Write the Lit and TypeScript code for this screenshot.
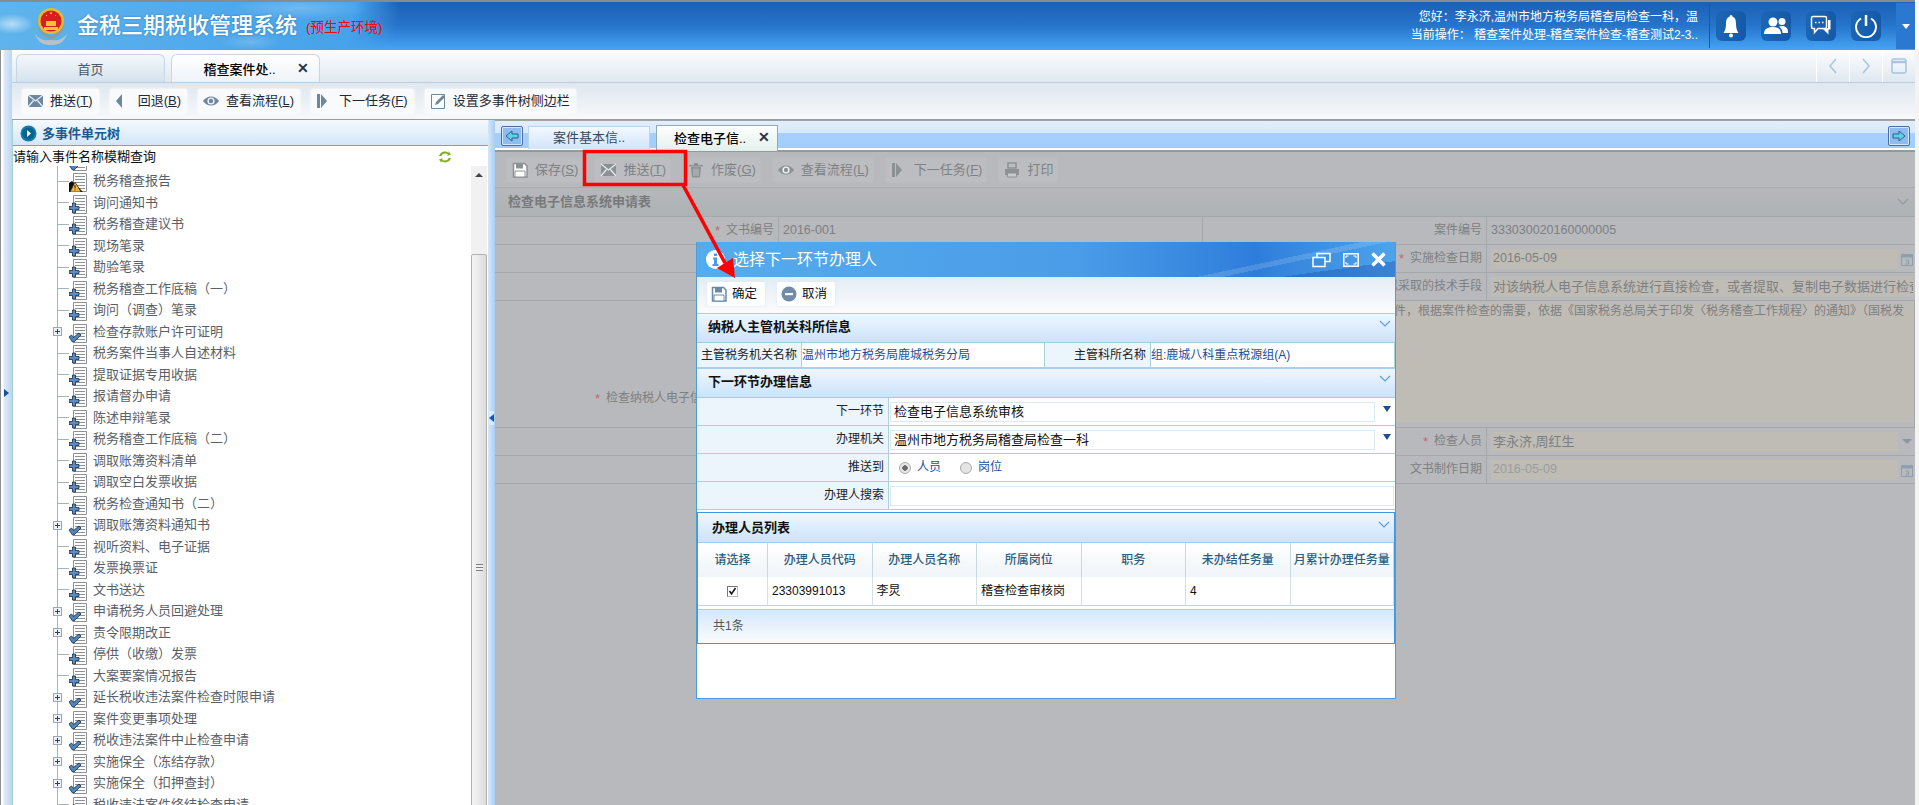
import { LitElement, html, css, svg } from 'lit';
import { customElement } from 'lit/decorators.js';

const docIcon = (kind: string) => html`
  <svg class="doc" width="20" height="22" viewBox="0 0 20 22">
    <path d="M4.500 3.500h13v18h-13z" fill="#fff" stroke="#8d9094"/>
    <path d="M6 6.500h10M6 9.500h10M6 12.500h10M6 15.500h10M6 18.500h10" stroke="#8d9094"/>
    ${kind === 'p' ? svg`<path d="M3.500 11h3v3.500H10v3H6.500V21h-3v-3.500H0v-3h3.500z" fill="#5a8bc6" stroke="#1d2b3c" stroke-width=".8"/>` : ''}
    ${kind === 'c' ? svg`<path d="M0 16l2.500-2 2 2.500L10 12l2 2-7 7H3.500z" fill="#4f86c0" stroke="#1b2835" stroke-width=".8"/>` : ''}
    ${kind === 'w' ? svg`<path d="M0 22V13l3-2 11 11z" fill="#111"/><path d="M6 12l6 10H1z" fill="#f6b73c" stroke="#222" stroke-width=".7"/><path d="M6 15v3.500M6 19.500v1" stroke="#222"/>` : ''}
  </svg>`;

const mailIcon = svg`<rect x="1" y="2" width="15" height="12" fill="currentColor"/><path d="M1 2l7.500 6L16 2M1 14l5.500-6.500M16 14l-5.500-6.500" fill="none" stroke="#e8eef3" stroke-width="1.200"/>`;
const backIcon = svg`<path d="M7 1v14L1 8z" fill="currentColor"/>`;
const eyeIcon = svg`<path d="M0 8c4-6 12-6 16 0-4 6-12 6-16 0z" fill="currentColor"/><circle cx="8" cy="8" r="3.600" fill="#f2f5f8"/><circle cx="8" cy="8" r="2.200" fill="currentColor"/>`;
const nextIcon = svg`<path d="M1 1h3v14H1z" fill="currentColor"/><path d="M5 1l6 7-6 7z" fill="currentColor"/>`;
const penIcon = svg`<path d="M1.500 1.500h13v14h-13z" fill="#fff" stroke="currentColor"/><path d="M5 12l1-3 7-7 2 2-7 7z" fill="currentColor"/>`;
const saveIcon = svg`<path d="M1.500 1.500h11l2.500 2.500v11h-13.500z" fill="#fff" stroke="currentColor" stroke-width="1.500"/><path d="M4 1.500h7v5H4z" fill="currentColor"/><path d="M3 9h10v6H3z" fill="#fff" stroke="currentColor"/>`;
const trashIcon = svg`<path d="M1 3h14v1.500H1zM6 1h4v2H6z" fill="currentColor"/><path d="M3 5h10l-1 10.500H4z" fill="currentColor"/><path d="M6 6.500v7.500M8 6.500v7.500M10 6.500v7.500" stroke="#c0c1c3"/>`;
const printIcon = svg`<path d="M4 1h8v5H4z" fill="none" stroke="currentColor" stroke-width="1.500"/><path d="M1 7h14v6H1z" fill="currentColor"/><path d="M3.500 11h9v4h-9z" fill="#c9cacc" stroke="currentColor"/>`;
const cancelIcon = svg`<circle cx="8" cy="8" r="7.500" fill="#6f8ca8"/><path d="M4 7h8v2.200H4z" fill="#fff"/>`;

const icon = (body: unknown) => html`
  <svg class="ti" viewBox="0 0 16 16" width="16" height="16">${body}</svg>`;

const shortcut = (label: string, key: string) => html`<span>${label}(<u>${key}</u>)</span>`;

const chevron = html`<svg class="chev" width="12" height="8" viewBox="0 0 12 8"><path d="M1 1l5 5 5-5" fill="none" stroke="currentColor" stroke-width="1.200"/></svg>`;
const calendar = html`<svg class="cal" width="12" height="14" viewBox="0 0 12 14"><path d="M.5 2.500h11v11H.500z" fill="none" stroke="#8ea0ad"/><path d="M.500 2.500h11v3H.500z" fill="#8ea0ad"/><path d="M4.500 8h3v4h-3M7.500 10h-2" fill="none" stroke="#8ea0ad"/></svg>`;

const treeItems: [string, string][] = [
  ['', 'c'],
  ['税务稽查报告', 'w'],
  ['询问通知书', 'p'],
  ['税务稽查建议书', 'p'],
  ['现场笔录', 'p'],
  ['勘验笔录', 'p'],
  ['税务稽查工作底稿（一）', 'p'],
  ['询问（调查）笔录', 'p'],
  ['检查存款账户许可证明', 'c'],
  ['税务案件当事人自述材料', 'p'],
  ['提取证据专用收据', 'p'],
  ['报请督办申请', 'p'],
  ['陈述申辩笔录', 'p'],
  ['税务稽查工作底稿（二）', 'p'],
  ['调取账簿资料清单', 'p'],
  ['调取空白发票收据', 'p'],
  ['税务检查通知书（二）', 'p'],
  ['调取账簿资料通知书', 'c'],
  ['视听资料、电子证据', 'p'],
  ['发票换票证', 'p'],
  ['文书送达', 'p'],
  ['申请税务人员回避处理', 'c'],
  ['责令限期改正', 'c'],
  ['停供（收缴）发票', 'p'],
  ['大案要案情况报告', 'p'],
  ['延长税收违法案件检查时限申请', 'c'],
  ['案件变更事项处理', 'c'],
  ['税收违法案件中止检查申请', 'c'],
  ['实施保全（冻结存款）', 'c'],
  ['实施保全（扣押查封）', 'c'],
  ['税收违法案件终结检查申请', 'p']
];

@customElement('app-root')
export class AppRoot extends LitElement {
  static styles = css`
    :host {
      display: block;
      position: relative;
      width: 1919px;
      height: 805px;
      overflow: hidden;
      background: #fff;
      font: 13px/1.2 "Liberation Sans", "Noto Sans CJK SC", sans-serif;
      color: #222;
    }
    u { text-decoration: underline; }
    svg { flex: none; display: block; }

    .header {
      height: 50px;
      box-sizing: border-box;
      border-top: 2px solid #8a8a8a;
      margin-right: 4px;
      display: flex;
      align-items: center;
      color: #fff;
      background:
        radial-gradient(ellipse 22px 10px at 12px 22px, rgba(255,255,255,.55), transparent),
        radial-gradient(ellipse 30px 8px at 250px 40px, rgba(255,255,255,.18), transparent),
        radial-gradient(ellipse 70px 12px at 300px 6px, rgba(255,255,255,.22), transparent),
        linear-gradient(100deg, #5fb4ec 0, #46a2ea 350px, rgba(70,160,235,0) 395px),
        linear-gradient(180deg, #1c5fb4 0, #2675cb 50%, #46a4f5 100%);
    }
    .emblem { margin-left: 32px; }
    .sys-title {
      margin-left: 7px;
      font-size: 22px;
      font-weight: 500;
      text-shadow: 0 0 2px rgba(20,70,130,.5);
    }
    .sys-env { margin: 5px 0 0 9px; color: #f00; font-size: 13.500px; }
    .user-info {
      margin-left: auto;
      width: 300px;
      text-align: right;
      font-size: 12px;
      line-height: 18px;
      padding-right: 11px;
      white-space: nowrap;
    }
    .head-tools {
      display: flex;
      align-items: center;
      gap: 15px;
      height: 44px;
      padding-left: 6px;
      border-left: 1px solid #175a9e;
    }
    .head-btn {
      width: 30px;
      height: 30px;
      border-radius: 6px;
      background: linear-gradient(90deg, #1a66b5, #1559a8);
      display: flex;
      align-items: center;
      justify-content: center;
    }
    .head-drop {
      width: 19px;
      height: 46px;
      background: #2a78cf;
      display: flex;
      align-items: center;
      justify-content: center;
    }
    .caret { width: 0; height: 0; border: 4px solid transparent; border-top: 5px solid #fff; border-bottom: 0; }

    .main { display: flex; height: 755px; }
    .strip {
      width: 12px;
      box-sizing: border-box;
      border-left: 1px solid #8f9295;
      background: linear-gradient(90deg, #fff 0, #fff 2px, #dfeaf7 3px, #b9d7f6 11px);
      display: flex;
      align-items: center;
      padding: 0 0 70px 3px;
    }
    .tri-r { width: 0; height: 0; border: 4px solid transparent; border-left: 5px solid #14508f; border-right: 0; }
    .tri-l { width: 0; height: 0; border: 4px solid transparent; border-right: 5px solid #1559aa; border-left: 0; }
    .workspace { flex: 1; min-width: 0; display: flex; flex-direction: column; }
    .end { width: 4px; background: #f3f3f3; }

    .tabs {
      height: 33px;
      box-sizing: border-box;
      display: flex;
      align-items: flex-end;
      gap: 6px;
      padding-left: 4px;
      background: linear-gradient(180deg, #fbfdff, #dfe8f0);
      border-bottom: 1px solid #b4cfe6;
    }
    .tab {
      width: 149px;
      height: 28px;
      box-sizing: border-box;
      border: 1px solid #c3d7e8;
      border-bottom: 0;
      border-radius: 6px 6px 0 0;
      padding-top: 2px;
      display: flex;
      align-items: center;
      justify-content: center;
      position: relative;
      color: #4c5a68;
      background: linear-gradient(180deg, #f3f7fb, #d5e2ee);
    }
    .tab.on { background: linear-gradient(180deg, #fff, #eef3f8); color: #000; font-weight: 500; padding-right: 12px; }
    .tab-x { position: absolute; right: 10px; top: 5px; color: #24354a; font-size: 14px; font-weight: 700; }
    .tab-nav { margin-left: auto; display: flex; height: 100%; }
    .tab-nav div {
      width: 32px;
      border-left: 1px solid #fff;
      color: #a9c4dc;
      display: flex;
      align-items: center;
      justify-content: center;
    }

    .toolbar {
      height: 37px;
      box-sizing: border-box;
      display: flex;
      align-items: center;
      gap: 11px;
      padding: 0 0 0 10px;
      background: linear-gradient(180deg, #dfe7ef, #f7f9fb);
      border-bottom: 1px solid #9a9d9f;
    }
    .btn {
      display: flex;
      align-items: center;
      gap: 7px;
      height: 24px;
      padding: 0 6px 0 5px;
      background: #f8fafc;
      box-shadow: 0 0 3px #fff;
      border-radius: 2px;
      white-space: nowrap;
      color: #1e2a36;
    }
    .ti { color: #6d879f; }

    .body { flex: 1; min-height: 0; display: flex; }
    .left { width: 476px; display: flex; flex-direction: column; background: #fff; box-sizing: border-box; border-left: 1px solid #a8cfca; }
    .left-head {
      height: 26px;
      flex: none;
      box-sizing: border-box;
      display: flex;
      align-items: center;
      gap: 5px;
      padding: 2px 0 0 7px;
      font-weight: 700;
      color: #1e5a90;
      background: linear-gradient(180deg, #f5f9fd, #d3e7f8);
      border-bottom: 1px solid #6fa6cd;
    }
    .search {
      height: 20px;
      flex: none;
      box-sizing: border-box;
      display: flex;
      align-items: center;
      justify-content: space-between;
      padding: 2px 36px 0 0;
      font-size: 13px;
      color: #111;
    }
    .tree-wrap { flex: 1; min-height: 0; display: flex; }
    .tree { flex: 1; overflow: hidden; padding-left: 44px; }
    .tree-inner { border-left: 1px solid #a4b2c2; margin-top: -17px; }
    .row { height: 21.500px; display: flex; align-items: center; position: relative; }
    .conn { width: 11px; border-top: 1px solid #a4b2c2; flex: none; }
    .row span { margin-left: 4px; color: #5a6068; white-space: nowrap; }
    .exp {
      position: absolute;
      left: -5px;
      top: 6px;
      width: 9px;
      height: 9px;
      box-sizing: border-box;
      border: 1px solid #9aa7b5;
      background: #eef1f6;
    }
    .exp::before { content: ""; position: absolute; left: 1px; right: 1px; top: 3px; height: 1px; background: #283f7c; }
    .exp::after { content: ""; position: absolute; top: 1px; bottom: 1px; left: 3px; width: 1px; background: #283f7c; }
    .row.open .conn { border-color: transparent; }
    .scroll {
      width: 16px;
      flex: none;
      overflow: hidden;
      background: #f1f1f1;
      margin-right: 1px;
      position: relative;
    }
    .scroll-up { position: absolute; left: 4px; top: 7px; width: 0; height: 0; border: 4px solid transparent; border-bottom: 4px solid #444; border-top: 0; }
    .thumb {
      margin-top: 88px;
      height: 626px;
      box-sizing: border-box;
      border: 1px solid #b2b2b2;
      border-radius: 2px;
      background: linear-gradient(90deg, #f5f5f5, #dcdcdc);
      display: flex;
      align-items: center;
      justify-content: center;
    }
    .grip { width: 7px; height: 7px; background: repeating-linear-gradient(180deg, #7d7d7d 0 1px, #f0f0f0 1px 3px); }

    .gutter {
      width: 7px;
      background: linear-gradient(90deg, #d7e7fa, #a8cdf5);
      display: flex;
      align-items: center;
      justify-content: center;
      padding-bottom: 90px;
      box-sizing: content-box;
    }
    .gutter-tab { width: 5px; height: 14px; background: #dcebfb; display: flex; align-items: center; }

    .right { flex: 1; min-width: 0; display: flex; flex-direction: column; background: #b8b9bc; }
    .sub-tabs {
      height: 32px;
      flex: none;
      box-sizing: border-box;
      display: flex;
      align-items: flex-end;
      padding: 0 5px 0 6px;
      position: relative;
      background: linear-gradient(180deg, #e3eefd 0, #d8e8fd 40%, #a7cffb 41%, #a2cdfb 92%, #fff 93%);
      border-top: 1px solid #9fa4a6;
      border-bottom: 2px solid #8f9b9f;
    }
    .arrow-btn {
      width: 22px;
      height: 20px;
      margin: 0 0 4px;
      box-sizing: border-box;
      border: 1px solid #4b6fa0;
      border-radius: 2px;
      background: #8fbcee;
      box-shadow: inset 0 0 0 1px #d5e6f8;
      display: flex;
      align-items: center;
      justify-content: center;
    }
    .sub-tab {
      width: 122px;
      height: 23px;
      box-sizing: border-box;
      border: 1px solid #b9d5ee;
      border-bottom: 0;
      display: flex;
      align-items: center;
      justify-content: center;
      color: #31485f;
      background: linear-gradient(180deg, #f3f8fe, #d1e5fb);
      margin: 0 0 1px 5px;
    }
    .sub-tab.on {
      margin-left: 6px;
      margin-bottom: -1px;
      height: 26px;
      border-color: #8ea9b8;
      background: linear-gradient(180deg, #fff, #e2f0ec);
      color: #000;
      font-weight: 500;
      padding-right: 14px;
      position: relative;
    }
    .sub-tab .tab-x { right: 7px; top: 3px; }
    .push-right { margin-left: auto; }

    .mask-bar {
      height: 35px;
      flex: none;
      display: flex;
      align-items: center;
      gap: 13px;
      padding-left: 12px;
      color: #7f8284;
    }
    .mask-bar .btn { background: #bcbdc0; box-shadow: 0 0 2px #c2c3c6; color: #7f8284; padding-right: 4px; }
    .mask-bar .ti { color: #8c9194; }
    .mask-title {
      height: 30px;
      flex: none;
      box-sizing: border-box;
      display: flex;
      align-items: center;
      justify-content: space-between;
      padding: 0 6px 0 13px;
      font-weight: 700;
      color: #77797b;
      border-top: 1px solid #a9acae;
      border-bottom: 1px solid #a2a8aa;
      background: linear-gradient(180deg, #b6b7ba, #aeb3b6);
    }
    .mask-title .chev { color: #919ca3; }
    .mask-form { display: grid; grid-template-columns: 284px 424px 284px 1fr; grid-template-rows: 28px 28px 28px 127px 28px 28px; }
    .lab, .val {
      box-sizing: border-box;
      border-bottom: 1px solid #a5a8aa;
      display: flex;
      align-items: center;
      color: #7d8082;
      white-space: nowrap;
      overflow: hidden;
    }
    .lab { justify-content: flex-end; padding-right: 4px; border-right: 1px solid #a5a8aa; font-size: 12px; }
    .lab i { font-style: normal; color: #c2696d; margin-right: 6px; font-size: 13px; }
    .val { padding-left: 4px; border-right: 1px solid #a5a8aa; font-size: 12.500px; }
    .val.last { border-right: 0; gap: 3px; padding-right: 2px; }
    .beige { flex: 1; min-width: 0; height: 20px; display: flex; align-items: center; padding-left: 2px; background: #bfbcb5; overflow: hidden; font-size: 13px; }
    .beige.num { font-size: 12.500px; }
    .wrap-lab { align-items: flex-start; padding-top: 90px; }
    .area { grid-column: 2 / 5; align-items: flex-start; padding: 1px 0 0 0; }
    .area div { width: 100%; height: 120px; background: #bfbcb5; padding: 2px 0 0 615px; box-sizing: border-box; overflow: hidden; font-size: 12px; }
    .drop-tri { width: 0; height: 0; border: 5px solid transparent; border-top: 5px solid #8b96a3; border-bottom: 0; margin: 0 1px; }
    .pale { color: #9a9d9f; }

    .overlay { position: absolute; left: 0; top: 0; pointer-events: none; }

    .modal {
      position: absolute;
      left: 696px;
      top: 242px;
      width: 700px;
      height: 457px;
      box-sizing: border-box;
      background: #fff;
      border: 1px solid #4a9de0;
      border-top: 0;
      display: flex;
      flex-direction: column;
    }
    .m-title {
      height: 35px;
      flex: none;
      display: flex;
      align-items: center;
      padding: 0 9px 0 9px;
      color: #fff;
      font-size: 16px;
      background:
        linear-gradient(168deg, transparent 0 77%, rgba(255,255,255,.14) 77% 80%, transparent 80%),
        linear-gradient(172deg, transparent 0 88%, rgba(20,70,170,.35) 88%),
        linear-gradient(90deg, #55acec, #4a9ce8 55%, #2f7ddb 80%, #4ea4ea 100%);
    }
    .m-title b { font-weight: 400; margin-left: 8px; }
    .m-win { margin-left: auto; display: flex; gap: 12px; align-items: center; }
    .m-bar {
      height: 36px;
      flex: none;
      box-sizing: border-box;
      display: flex;
      align-items: center;
      gap: 12px;
      padding: 0 0 2px 10px;
      background: linear-gradient(180deg, #e3ecf4, #fbfcfe);
    }
    .m-bar .btn { gap: 5px; padding: 0 8px 0 4px; font-size: 12.500px; color: #111; background: #fdfeff; box-shadow: 0 0 3px #dfe6ee; }
    .m-bar .ti { color: #6b89a6; }
    .sec {
      height: 30px;
      flex: none;
      box-sizing: border-box;
      display: flex;
      align-items: center;
      justify-content: space-between;
      padding: 0 4px 3px 11px;
      font-weight: 700;
      color: #111;
      border-top: 1px solid #a8d0ea;
      border-bottom: 1px solid #a2cde0;
      background: linear-gradient(180deg, #eff7ff, #cbe3fb);
    }
    .sec .chev { color: #5f9ddc; margin-top: -5px; }
    .info-row { height: 25px; flex: none; display: grid; grid-template-columns: 105px 243px 106px 1fr; font-size: 12px; }
    .info-row > div {
      box-sizing: border-box;
      display: flex;
      align-items: center;
      border-right: 1px solid #a9d3d6;
      border-bottom: 1px solid #a9d3d6;
      white-space: nowrap;
      overflow: hidden;
    }
    .k { justify-content: flex-end; padding-right: 4px; background: #edf5fc; color: #222; font-size: 12px; }
    .v { color: #1b4d9c; }
    .form-row { height: 28px; flex: none; display: grid; grid-template-columns: 192px 1fr; }
    .form-row > div { box-sizing: border-box; border-bottom: 1px solid #a9d3d6; display: flex; align-items: center; }
    .form-row .k { border-right: 1px solid #a9d3d6; }
    .f-val { padding: 0 4px 0 1px; gap: 8px; }
    .f-val.wide { padding-right: 1px; }
    .f-val.radios { gap: 5px; font-size: 12px; }
    .input {
      flex: 1;
      height: 20px;
      box-sizing: border-box;
      border: 1px solid #dde8ee;
      padding-left: 3px;
      color: #111;
      line-height: 18px;
    }
    .tri-down { width: 0; height: 0; border: 4.500px solid transparent; border-top: 6px solid #1d4e8d; border-bottom: 0; margin-bottom: 5px; }
    .radio { width: 12px; height: 12px; box-sizing: border-box; border-radius: 50%; border: 1px solid #aaa; background: #e4e4e4; margin-left: 8px; flex: none; }
    .radio.on { background: radial-gradient(circle, #6b6b6b 0 2.500px, #e8e8e8 3px); margin-left: 9px; }
    .radio-t { color: #1b4d9c; margin: 0 0 0 1px; }
    .radio-g { margin-left: 14px; }
    .list {
      margin-top: 2px;
      flex: none;
      height: 132px;
      box-sizing: border-box;
      border: 1px solid #3f97de;
      display: flex;
      flex-direction: column;
    }
    .list .sec { border-top: 0; border-bottom: 1px solid #9ecbe8; padding-left: 14px; padding-bottom: 0; height: 30px; }
    .grid { display: grid; grid-template-columns: 70px repeat(5, 104.500px) 1fr; }
    .th {
      height: 34px;
      box-sizing: border-box;
      border-right: 1px solid #c6d9de;
      display: flex;
      align-items: center;
      justify-content: center;
      font-size: 12px;
      font-weight: 500;
      color: #2e5d7d;
      background: linear-gradient(180deg, #fff, #eff4f8);
      white-space: nowrap;
    }
    .td {
      height: 29px;
      box-sizing: border-box;
      border-right: 1px solid #d4dfe1;
      border-bottom: 1px solid #c5d2d3;
      display: flex;
      align-items: center;
      padding-left: 4px;
      font-size: 12px;
      color: #111;
    }
    .td.center { justify-content: center; padding: 0; }
    .check { width: 11px; height: 11px; box-sizing: border-box; border: 1px solid #777; border-right-color: #bbb; border-bottom-color: #bbb; background: #fff; }
    .foot {
      flex: 1;
      margin-top: 3px;
      box-sizing: border-box;
      display: flex;
      align-items: center;
      padding-left: 15px;
      font-size: 12px;
      color: #555;
      border-top: 1px solid #a8d0ea;
      background: linear-gradient(180deg, #d5e7fa, #fafdff);
    }
  `;

  render() {
    return html`
      ${this.renderHeader()}
      <div class="main">
        <div class="strip"><div class="tri-r"></div></div>
        <div class="workspace">
          ${this.renderTabs()}
          <div class="toolbar">
            <div class="btn">${icon(mailIcon)}${shortcut('推送', 'T')}</div>
            <div class="btn">${icon(backIcon)}${shortcut('回退', 'B')}</div>
            <div class="btn">${icon(eyeIcon)}${shortcut('查看流程', 'L')}</div>
            <div class="btn">${icon(nextIcon)}${shortcut('下一任务', 'F')}</div>
            <div class="btn">${icon(penIcon)}<span>设置多事件树侧边栏</span></div>
          </div>
          <div class="body">
            ${this.renderLeft()}
            <div class="gutter"><div class="gutter-tab"><div class="tri-l"></div></div></div>
            ${this.renderRight()}
          </div>
        </div>
        <div class="end"></div>
      </div>
      ${this.renderModal()}
      <svg class="overlay" width="1919" height="805">
        <rect x="584.500" y="151.500" width="101" height="33" fill="none" stroke="#f00" stroke-width="3.500"/>
        <path d="M683 185L725 263" stroke="#f00" stroke-width="3.500"/>
        <path d="M735 278L717 268L733 258z" fill="#f00"/>
      </svg>
    `;
  }

  renderHeader() {
    return html`
      <div class="header">
        <svg class="emblem" width="38" height="38" viewBox="0 0 38 38">
          <path d="M3 27c5 6 10 7 16 6 6 1 11 0 16-6-3 9-9 11-16 11S6 36 3 27z" fill="#b9c1c6"/>
          <path d="M7 9C3 20 9 30 19 32 29 30 35 20 31 9c1 14-5 19-12 19S6 23 7 9z" fill="#8d9aa0"/>
          <circle cx="19" cy="14" r="13" fill="#e9b92f"/>
          <circle cx="19" cy="14" r="10.500" fill="#d5201f"/>
          <path d="M12 20h14v3H12zM14 14h10v5H14z" fill="#f1c63c"/>
          <path d="M19 4l1 3h-2zM14 8h1v1h-1zM23 8h1v1h-1z" fill="#f6d24a"/>
        </svg>
        <div class="sys-title">金税三期税收管理系统</div>
        <div class="sys-env">(预生产环境)</div>
        <div class="user-info">
          <div>您好：李永济,温州市地方税务局稽查局检查一科，温</div>
          <div>当前操作： 稽查案件处理-稽查案件检查-稽查测试2-3..</div>
        </div>
        <div class="head-tools">
          <div class="head-btn">
            <svg width="16" height="24" viewBox="0 0 16 24"><path d="M8 1c1 0 1.500.7 1.500 1.800 3 1 3.500 4 3.500 7.200 0 4 1 7 2.500 9H.5C2 17 3 14 3 10c0-3.200.5-6.200 3.500-7.200C6.500 1.700 7 1 8 1z" fill="#fff"/><circle cx="8" cy="21.500" r="2" fill="#fff"/></svg>
          </div>
          <div class="head-btn">
            <svg width="24" height="18" viewBox="0 0 24 18"><circle cx="9" cy="5" r="4.500" fill="#fff"/><circle cx="18" cy="4.500" r="3.500" fill="#fff"/><path d="M0 17c0-5 3.500-7 9-7s8 2 8 7z" fill="#fff"/><path d="M18 9c4 0 6 2 6 7h-5.500c0-3-1.500-5-3.500-6.500.9-.3 1.900-.5 3-.5z" fill="#fff"/></svg>
          </div>
          <div class="head-btn">
            <svg width="22" height="22" viewBox="0 0 22 22"><path d="M3 1.500h12c1 0 1.500.5 1.500 1.500v9c0 1-.5 1.500-1.500 1.500H8l-3.500 4v-4H3c-1 0-1.500-.5-1.500-1.500V3c0-1 .5-1.500 1.500-1.500z" fill="none" stroke="#fff" stroke-width="1.500"/><path d="M5 7.500h1.500M8.500 7.500H10M12 7.500h1.500" stroke="#fff" stroke-width="1.500"/><path d="M18 5h2.500v9.500h-2v5L14 15h-2l6-2z" fill="#fff"/></svg>
          </div>
          <div class="head-btn">
            <svg width="24" height="24" viewBox="0 0 24 24"><path d="M7 4.500a10 10 0 1 0 10 0" fill="none" stroke="#fff" stroke-width="2"/><path d="M12 1v11" stroke="#fff" stroke-width="2.500"/></svg>
          </div>
          <div class="head-drop"><div class="caret"></div></div>
        </div>
      </div>
    `;
  }

  renderTabs() {
    return html`
      <div class="tabs">
        <div class="tab">首页</div>
        <div class="tab on">稽查案件处..<span class="tab-x">✕</span></div>
        <div class="tab-nav">
          <div><svg width="10" height="18" viewBox="0 0 10 18"><path d="M8 2L2 9l6 7" fill="none" stroke="currentColor" stroke-width="1.500"/></svg></div>
          <div><svg width="10" height="18" viewBox="0 0 10 18"><path d="M2 2l6 7-6 7" fill="none" stroke="currentColor" stroke-width="1.500"/></svg></div>
          <div><svg width="16" height="16" viewBox="0 0 16 16"><rect x="1" y="1" width="14" height="14" rx="2" fill="none" stroke="currentColor" stroke-width="1.500"/><path d="M1 4h14" stroke="currentColor" stroke-width="2.500"/></svg></div>
        </div>
      </div>
    `;
  }

  renderLeft() {
    return html`
      <div class="left">
        <div class="left-head">
          <svg width="17" height="17" viewBox="0 0 17 17"><circle cx="8.500" cy="8.500" r="8" fill="#0f7ea8"/><circle cx="8.500" cy="8.500" r="6" fill="#06638e"/><path d="M7 5l4 3.500L7 12z" fill="#fff"/></svg>
          <span>多事件单元树</span>
        </div>
        <div class="search">
          <span>请输入事件名称模糊查询</span>
          <svg width="14" height="14" viewBox="0 0 14 14"><path d="M1 6C2 2 7 0 10.500 3V1L13 4.500 9 6l1-1.500C8 3 4.500 3 3.500 6zM13 8c-1 4-6 6-9.500 3v2L1 9.500 5 8 4 9.500c2 1.500 5.500 1.500 6.500-1.500z" fill="#7fb021"/></svg>
        </div>
        <div class="tree-wrap">
          <div class="tree">
            <div class="tree-inner">
              ${treeItems.map(([text, kind]) => html`
                <div class="row ${kind === 'c' ? 'open' : ''}">
                  ${kind === 'c' ? html`<div class="exp"></div>` : ''}
                  <div class="conn"></div>
                  ${docIcon(kind)}
                  <span>${text}</span>
                </div>
              `)}
            </div>
          </div>
          <div class="scroll">
            <div class="scroll-up"></div>
            <div class="thumb"><div class="grip"></div></div>
          </div>
        </div>
      </div>
    `;
  }

  renderRight() {
    return html`
      <div class="right">
        <div class="sub-tabs">
          <div class="arrow-btn">
            <svg width="14" height="12" viewBox="0 0 14 12"><path d="M1 6l6-5v3h6v4H7v3z" fill="#5fd3e6" stroke="#2b5f8f"/></svg>
          </div>
          <div class="sub-tab">案件基本信..</div>
          <div class="sub-tab on">检查电子信..<span class="tab-x">✕</span></div>
          <div class="arrow-btn push-right">
            <svg width="14" height="12" viewBox="0 0 14 12"><path d="M13 6L7 1v3H1v4h6v3z" fill="#5fd3e6" stroke="#2b5f8f"/></svg>
          </div>
        </div>
        <div class="mask-bar">
          <div class="btn">${icon(saveIcon)}${shortcut('保存', 'S')}</div>
          <div class="btn">${icon(mailIcon)}${shortcut('推送', 'T')}</div>
          <div class="btn">${icon(trashIcon)}${shortcut('作废', 'G')}</div>
          <div class="btn">${icon(eyeIcon)}${shortcut('查看流程', 'L')}</div>
          <div class="btn">${icon(nextIcon)}${shortcut('下一任务', 'F')}</div>
          <div class="btn">${icon(printIcon)}<span>打印</span></div>
        </div>
        <div class="mask-title"><span>检查电子信息系统申请表</span>${chevron}</div>
        <div class="mask-form">
          <div class="lab"><i>*</i>文书编号</div>
          <div class="val">2016-001</div>
          <div class="lab">案件编号</div>
          <div class="val last">333030020160000005</div>

          <div class="lab"></div>
          <div class="val"></div>
          <div class="lab"><i>*</i>实施检查日期</div>
          <div class="val last"><div class="beige num">2016-05-09</div>${calendar}</div>

          <div class="lab"></div>
          <div class="val"></div>
          <div class="lab">拟采取的技术手段</div>
          <div class="val last"><div class="beige">对该纳税人电子信息系统进行直接检查，或者提取、复制电子数据进行检查</div></div>

          <div class="lab wrap-lab"><i>*</i>检查纳税人电子信息系统的原因</div>
          <div class="val area"><div>件，根据案件检查的需要，依据《国家税务总局关于印发〈税务稽查工作规程〉的通知》（国税发</div></div>

          <div class="lab"></div>
          <div class="val"></div>
          <div class="lab"><i>*</i>检查人员</div>
          <div class="val last"><div class="beige">李永济,周红生</div><div class="drop-tri"></div></div>

          <div class="lab"></div>
          <div class="val"></div>
          <div class="lab">文书制作日期</div>
          <div class="val last pale"><div class="beige num">2016-05-09</div>${calendar}</div>
        </div>
      </div>
    `;
  }

  renderModal() {
    return html`
      <div class="modal">
        <div class="m-title">
          <svg width="19" height="19" viewBox="0 0 19 19"><circle cx="9.500" cy="9.500" r="9.500" fill="#fff"/><path d="M8 3.500h3v2.500H8zM7 7.500h4v6.500h1.500V16H6.500v-2H8V9.500H7z" fill="#4a9ce8"/></svg>
          <b>选择下一环节办理人</b>
          <div class="m-win">
            <svg width="19" height="16" viewBox="0 0 19 16"><path d="M1 5.500h12v9H1zM5 5V1.500h13v8h-4.500" fill="none" stroke="#fff" stroke-width="1.500"/></svg>
            <svg width="16" height="14" viewBox="0 0 16 14"><rect x=".8" y=".8" width="14.400" height="12.400" fill="none" stroke="#fff" stroke-width="1.500"/><path d="M3 5V3h2.500M13 5V3h-2.500M3 9v2h2.500M13 9v2h-2.500" fill="none" stroke="#fff"/></svg>
            <svg width="15" height="15" viewBox="0 0 15 15"><path d="M1.500 1.500l12 12M13.500 1.500l-12 12" stroke="#fff" stroke-width="3.500"/></svg>
          </div>
        </div>
        <div class="m-bar">
          <div class="btn">${icon(saveIcon)}<span>确定</span></div>
          <div class="btn">${icon(cancelIcon)}<span>取消</span></div>
        </div>
        <div class="sec"><span>纳税人主管机关科所信息</span>${chevron}</div>
        <div class="info-row">
          <div class="k">主管税务机关名称</div>
          <div class="v">温州市地方税务局鹿城税务分局</div>
          <div class="k">主管科所名称</div>
          <div class="v">组:鹿城八科重点税源组(A)</div>
        </div>
        <div class="sec"><span>下一环节办理信息</span>${chevron}</div>
        <div class="form-row">
          <div class="k">下一环节</div>
          <div class="f-val"><div class="input">检查电子信息系统审核</div><div class="tri-down"></div></div>
        </div>
        <div class="form-row">
          <div class="k">办理机关</div>
          <div class="f-val"><div class="input">温州市地方税务局稽查局检查一科</div><div class="tri-down"></div></div>
        </div>
        <div class="form-row">
          <div class="k">推送到</div>
          <div class="f-val radios">
            <div class="radio on"></div><span class="radio-t">人员</span>
            <div class="radio radio-g"></div><span class="radio-t">岗位</span>
          </div>
        </div>
        <div class="form-row">
          <div class="k">办理人搜索</div>
          <div class="f-val wide"><div class="input"></div></div>
        </div>
        <div class="list">
          <div class="sec"><span>办理人员列表</span>${chevron}</div>
          <div class="grid">
            ${['请选择', '办理人员代码', '办理人员名称', '所属岗位', '职务', '未办结任务量', '月累计办理任务量'].map(h => html`<div class="th">${h}</div>`)}
            <div class="td center">
              <div class="check"><svg width="9" height="9" viewBox="0 0 9 9"><path d="M1.500 4l2 3 4-6" fill="none" stroke="#111" stroke-width="1.500"/></svg></div>
            </div>
            <div class="td">23303991013</div>
            <div class="td">李炅</div>
            <div class="td">稽查检查审核岗</div>
            <div class="td"></div>
            <div class="td">4</div>
            <div class="td"></div>
          </div>
          <div class="foot">共1条</div>
        </div>
      </div>
    `;
  }
}
